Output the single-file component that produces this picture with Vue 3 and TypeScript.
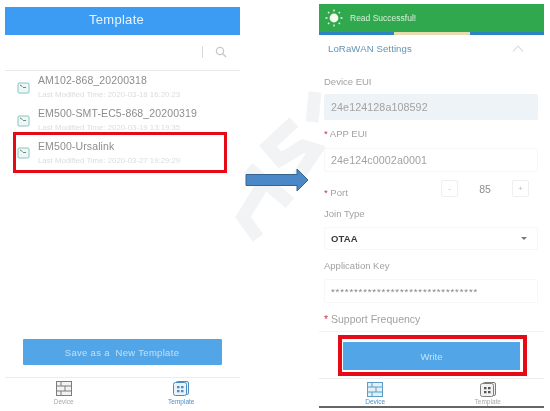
<script setup lang="ts">
// Two phone screens side by side, with the red annotation boxes and the arrow from the manual page.
const templates = [
  { name: 'AM102-868_20200318', time: '2020-03-18 16:20:23', marked: false },
  { name: 'EM500-SMT-EC5-868_20200319', time: '2020-03-19 13:19:35', marked: false },
  { name: 'EM500-Ursalink', time: '2020-03-27 19:29:29', marked: true },
]
</script>

<template>
  <div class="page">
    <!-- faint watermark behind the page -->
    <svg class="watermark" width="90" height="270" viewBox="235 0 90 270" fill="none" stroke="#f2f3f4" stroke-width="13">
      <path d="M315 92 L312 122" />
      <path d="M294 122 L268 146 L280 160 L303 146 L316 150 L296 180" />
      <path d="M248 168 L290 203" />
      <path d="M262 186 L243 217 L258 238" />
    </svg>

    <section class="phone left">
      <header class="title">Template</header>
      <div class="search">
        <span class="search-sep"></span>
        <svg width="12" height="12" viewBox="0 0 12 12" fill="none" stroke="#c4c8cc" stroke-width="1.3">
          <circle cx="5" cy="5" r="3.6" />
          <path d="M7.8 7.8 L11 11" />
        </svg>
      </div>
      <ul class="list">
        <li v-for="t in templates" :key="t.name" class="row">
          <svg class="file-icon" width="13" height="12" viewBox="0 0 13 12" fill="#eef7f6" stroke="#8cc4c0" stroke-width="1">
            <rect x="1" y="1" width="11" height="10" rx="1" />
            <path d="M3 3 L5.5 4.5 M6 5.5 L9 5.5" stroke="#5f8f8c" />
          </svg>
          <div class="row-text">
            <div class="row-name">{{ t.name }}</div>
            <div class="row-time">Last Modified Time: {{ t.time }}</div>
          </div>
          <span v-if="t.marked" class="mark-row"></span>
        </li>
      </ul>
      <button class="save">Save as a&nbsp; New Template</button>
      <nav class="tabs">
        <div class="tab">
          <svg width="16" height="15" viewBox="0 0 16 15" fill="#f2f2f2" stroke="#7d7d7d" stroke-width="1">
            <rect x="0.5" y="0.5" width="15" height="14" />
            <path d="M0.5 5 H15.5 M0.5 10 H15.5 M5 0.5 V5 M9 5 V10 M5 10 V14.5" />
          </svg>
          <span>Device</span>
        </div>
        <div class="tab on">
          <svg width="16" height="15" viewBox="0 0 16 15" fill="#eaf3fb" stroke="#4d8cc0" stroke-width="1">
            <rect x="3" y="0.5" width="12.5" height="13" rx="1.5" />
            <rect x="0.5" y="1.5" width="13" height="13" rx="2" />
            <path d="M4 5 H6.5 V7.3 H4 Z M8 5 H10.5 V7.3 H8 Z M4 9 H6.5 V11.3 H4 Z M8 9 H10.5 V11.3 H8 Z" fill="#4d8cc0" stroke="none" />
          </svg>
          <span>Template</span>
        </div>
      </nav>
    </section>

    <!-- arrow between the two screens -->
    <svg class="arrow" width="64" height="24" viewBox="0 0 64 24">
      <path d="M1 6.5 H52 V1 L63 12 L52 23 V17.5 H1 Z" fill="#4a88c7" stroke="#36648f" stroke-width="1" />
    </svg>

    <section class="phone right">
      <div class="toast">
        <svg width="18" height="18" viewBox="0 0 18 18" stroke="#e6f5e2" stroke-width="1.4" fill="#f4fbf0">
          <circle cx="9" cy="9" r="4.4" stroke="none" />
          <path d="M9 0.5 V2.5 M9 15.5 V17.5 M0.5 9 H2.5 M15.5 9 H17.5 M3 3 L4.3 4.3 M13.7 13.7 L15 15 M3 15 L4.3 13.7 M13.7 4.3 L15 3" />
        </svg>
        <span>Read Successful!</span>
      </div>
      <div class="strip"><span></span></div>
      <div class="section-head">
        <span>LoRaWAN Settings</span>
        <svg width="12" height="7" viewBox="0 0 12 7" fill="none" stroke="#d4d8dc" stroke-width="1.1">
          <path d="M1 6.5 L6 1 L11 6.5" />
        </svg>
      </div>

      <div class="form">
        <label class="lbl">Device EUI</label>
        <div class="field readonly">24e124128a108592</div>

        <label class="lbl app"><i>*</i> APP EUI</label>
        <div class="field app-field">24e124c0002a0001</div>

        <div class="port">
          <label class="lbl"><i>*</i> Port</label>
          <div class="stepper">
            <span class="step">-</span>
            <span class="port-val">85</span>
            <span class="step">+</span>
          </div>
        </div>

        <label class="lbl">Join Type</label>
        <div class="field select">
          <b>OTAA</b>
          <span class="caret"></span>
        </div>

        <label class="lbl">Application Key</label>
        <div class="field stars">********************************</div>

        <label class="lbl big"><i>*</i> Support Frequency</label>
      </div>

      <div class="write-bar">
        <span class="mark-write"></span>
        <button class="write">Write</button>
      </div>

      <nav class="tabs">
        <div class="tab on">
          <svg width="16" height="15" viewBox="0 0 16 15" fill="#e2f0f8" stroke="#5b9cc9" stroke-width="1">
            <rect x="0.5" y="0.5" width="15" height="14" />
            <path d="M0.5 5 H15.5 M0.5 10 H15.5 M5 0.5 V5 M9 5 V10 M5 10 V14.5" />
          </svg>
          <span>Device</span>
        </div>
        <div class="tab">
          <svg width="16" height="15" viewBox="0 0 16 15" fill="#f2f2f2" stroke="#7d7d7d" stroke-width="1">
            <rect x="3" y="0.5" width="12.5" height="13" rx="1.5" />
            <rect x="0.5" y="1.5" width="13" height="13" rx="2" />
            <path d="M4 5 H6.5 V7.3 H4 Z M8 5 H10.5 V7.3 H8 Z M4 9 H6.5 V11.3 H4 Z M8 9 H10.5 V11.3 H8 Z" fill="#555" stroke="none" />
          </svg>
          <span>Template</span>
        </div>
      </nav>
      <div class="home-line"></div>
    </section>
  </div>
</template>

<style>
html, body { background: #fff; }
</style>

<style scoped>
* { box-sizing: border-box; }
.page {
  position: relative;
  width: 550px;
  height: 411px;
  overflow: hidden;
  background: #fff;
  font-family: "Liberation Sans", Arial, sans-serif;
  filter: blur(0.35px);
}
.watermark { position: absolute; left: 235px; top: 0; }
.phone { position: absolute; display: flex; flex-direction: column; }
.left { left: 5px; top: 7px; width: 235px; height: 404px; }
.right { left: 319px; top: 4px; width: 225px; height: 404px; }

.title {
  height: 28px;
  line-height: 26px;
  padding-right: 12px;
  text-align: center;
  background: #3c9cf4;
  color: #e8f4ff;
  font-size: 13px;
  letter-spacing: 0.3px;
}
.search {
  height: 36px;
  display: flex;
  align-items: center;
  justify-content: flex-end;
  gap: 12px;
  padding: 0 13px 0 0;
  border-bottom: 1px solid #e9e9e9;
}
.search-sep { width: 1px; height: 12px; background: #d8d8d8; }
.list { list-style: none; margin: 0; padding: 0; height: 271px; }
.row {
  position: relative;
  display: flex;
  align-items: center;
  height: 32.7px;
  padding-left: 12px;
  gap: 8px;
}
.file-icon { flex: none; margin-top: 2px; }
.row-name { font-size: 10.5px; line-height: 13px; color: #8d8d8d; letter-spacing: 0.12px; white-space: nowrap; }
.row-time { font-size: 7.8px; line-height: 9px; margin-top: 3px; color: #dcdcdc; white-space: nowrap; }
.mark-row {
  position: absolute;
  left: 8px;
  top: -4px;
  width: 214px;
  height: 41px;
  border: 3.5px solid #e60a17;
}
.save {
  align-self: center;
  margin: 0 0 0 -1px;
  width: 199px;
  height: 26px;
  border: 0;
  border-radius: 1px;
  background: #52a6e8;
  color: #bfe0f7;
  font: 9.5px "Liberation Sans", Arial, sans-serif;
  letter-spacing: 0.3px;
}
.tabs {
  margin-top: 12px;
  height: 34px;
  display: flex;
  border-top: 1px solid #ececec;
}
.tab {
  flex: 1;
  display: flex;
  flex-direction: column;
  align-items: center;
  padding-top: 3px;
  gap: 2px;
  color: #a9a9a9;
  font-size: 6.5px;
}
.tab.on { color: #4d8fc8; }

.toast {
  height: 28px;
  display: flex;
  align-items: center;
  gap: 7px;
  padding-left: 6px;
  background: #2fa84e;
  color: #d9f0db;
  font-size: 8.5px;
}
.strip { height: 3px; background: #2a85c2; padding-left: 75px; }
.strip span { display: block; width: 76px; height: 100%; background: #e5ddb0; }
.section-head {
  height: 27px;
  display: flex;
  align-items: center;
  justify-content: space-between;
  padding: 0 20px 0 9px;
  color: #6394b5;
  font-size: 9.6px;
  letter-spacing: 0.1px;
}
.form { padding: 14px 6px 6px 5px; }
.lbl { display: block; color: #a2a2a2; font-size: 9.5px; line-height: 12px; }
.lbl i { color: #d0354a; font-style: normal; }
.lbl.app { margin-top: 8px; }
.lbl.big { font-size: 10.5px; margin-top: 10px; }
.field {
  height: 24px;
  margin-top: 7px;
  padding-left: 6px;
  display: flex;
  align-items: center;
  border: 1px solid #f7f7f7;
  border-radius: 2px;
  color: #a2a2a2;
  font-size: 10.7px;
  letter-spacing: 0.1px;
}
.readonly { background: #eef3f8; border-color: #eef3f8; height: 26px; margin-top: 6px; }
.app-field { margin-top: 8px; }
.select { justify-content: space-between; padding-right: 10px; color: #3a3a3a; height: 23px; }
.select b { font-size: 9.5px; }
.caret { width: 0; height: 0; border: 3px solid transparent; border-top: 3.5px solid #777; border-bottom: 0; }
.stars { font-size: 9.5px; letter-spacing: 0.9px; color: #888; }
.port { display: flex; align-items: flex-start; justify-content: space-between; height: 18px; margin: 8px 0 10px; padding-right: 9px; }
.port .lbl { margin-top: 7px; }
.select + .lbl { margin-top: 10px; }
.stepper { display: flex; align-items: center; }
.step {
  width: 17px;
  height: 17px;
  display: flex;
  align-items: center;
  justify-content: center;
  border: 1px solid #efefef;
  border-radius: 2px;
  color: #b8b8b8;
  font-size: 8px;
}
.port-val { width: 54px; text-align: center; color: #8e8e8e; font-size: 10.5px; }
.write-bar {
  position: relative;
  height: 47px;
  padding: 10px 0 0 24px;
  border-top: 1px solid #f3f3f3;
}
.write {
  display: block;
  width: 177px;
  height: 28px;
  border: 0;
  background: #52a6e8;
  color: #c3e2f8;
  font: 9.5px "Liberation Sans", Arial, sans-serif;
}
.mark-write {
  position: absolute;
  left: 19px;
  top: 3px;
  width: 189px;
  height: 41px;
  border: 4px solid #e60a17;
}
.right .tabs { margin-top: 0; height: 28px; }
.right .tab { padding-top: 3px; gap: 1px; }
.home-line { height: 2px; background: #666; }
.arrow { position: absolute; left: 245px; top: 168px; }
</style>
